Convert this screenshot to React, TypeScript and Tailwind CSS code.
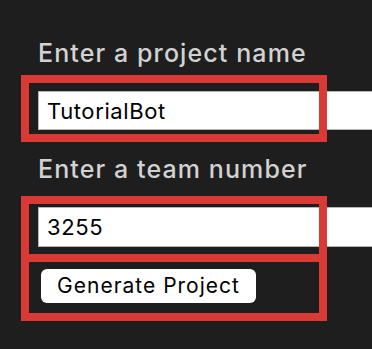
import { useState } from 'react';

// Red annotation frames drawn over the form
function Frame({ className }: { className: string }) {
    return <div className={`pointer-events-none absolute border-[8px] border-[#d93a35] ${className}`} />;
}

export default function App() {
    const [projectName, setProjectName] = useState('TutorialBot');
    const [teamNumber, setTeamNumber] = useState('3255');

    const labelClassName = "block text-[25px] font-medium leading-[30px] tracking-[1.1px] text-[#d2d2d2]";
    const inputClassName = "block w-[420px] border border-[#b4b4b4] bg-white pl-[8px] text-[22px] tracking-[0.6px] text-black outline-none";

    return (
        <div className="relative h-[349px] overflow-hidden bg-[#1e1e1e] pl-[38px] pt-[38px] font-['Inter',sans-serif]">
            <label className={labelClassName}>Enter a project name</label>
            <input
                type="text"
                value={projectName}
                onChange={e => setProjectName(e.target.value)}
                className={`${inputClassName} mt-[23px] h-[39px]`}
            />

            <label className={`${labelClassName} mt-[24px]`}>Enter a team number</label>
            <input
                type="text"
                value={teamNumber}
                onChange={e => setTeamNumber(e.target.value)}
                className={`${inputClassName} mt-[23px] h-[40px]`}
            />

            <button className="ml-[3px] mt-[22px] flex h-[34px] w-[215px] items-center justify-center rounded-[6px] bg-white text-[21px] tracking-[1px] text-black">
                Generate Project
            </button>

            <Frame className="left-[21px] top-[75px] h-[67px] w-[306px]" />
            <Frame className="left-[21px] top-[196px] h-[66px] w-[306px]" />
            <Frame className="left-[21px] top-[254px] h-[67px] w-[306px]" />
        </div>
    );
}
